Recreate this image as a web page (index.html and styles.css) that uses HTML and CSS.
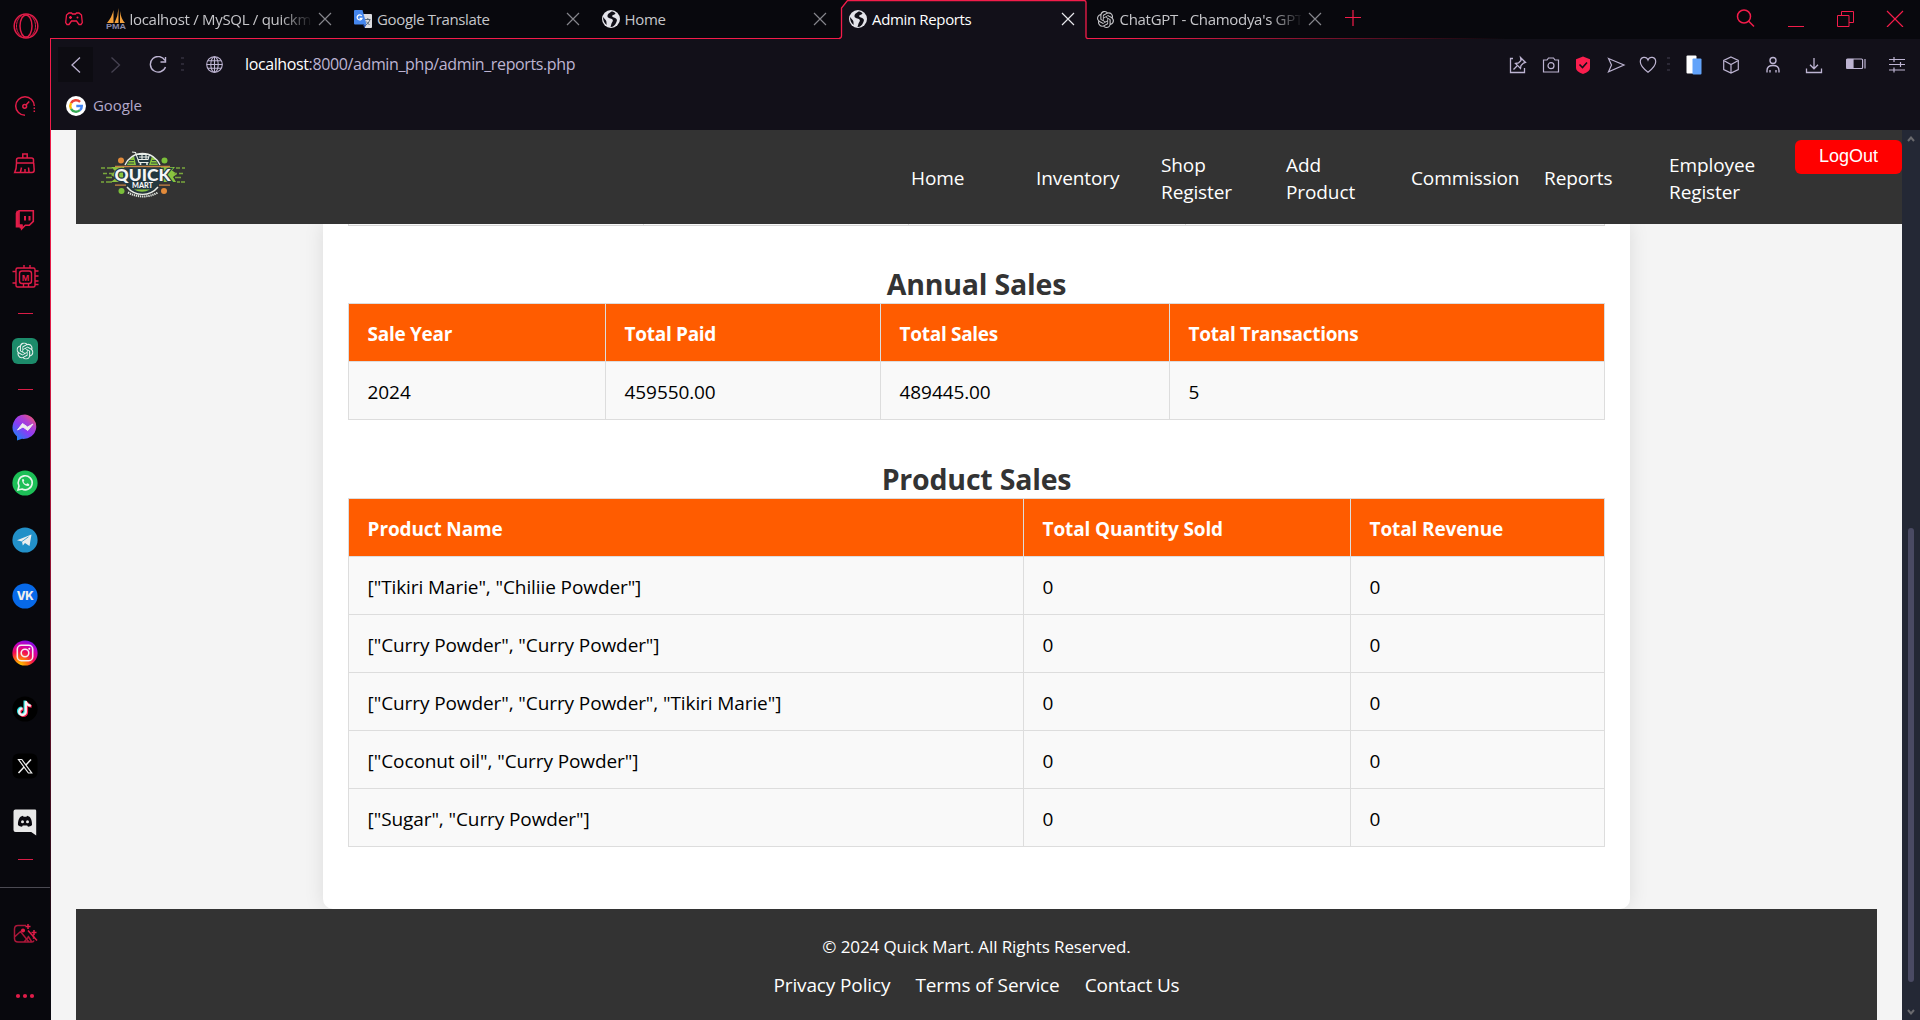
FILE: index.html
```html
<!DOCTYPE html>
<html lang="en">
<head>
<meta charset="utf-8">
<title>Admin Reports</title>
<link rel="stylesheet" href="styles.css">
</head>
<body>
<svg class="defs" width="0" height="0">
  <defs>
    <symbol id="close" viewBox="0 0 14 14"><path d="M1 1l12 12M13 1L1 13" fill="none" stroke="currentColor" stroke-width="1.2"/></symbol>
    <symbol id="world" viewBox="0 0 18 18"><circle cx="9" cy="9" r="9" fill="#e4e4ea"/><path d="M9.500 1.500C7 3 5 4.500 5.500 6.500c.5 2 3.500 1.500 5 3 1.200 1.500-.5 2.500-1 4L8.500 17c3 0 4.500-2 5.500-4 .5-1.500 1.500-2.500.5-4-1.500-1.500-4-1.500-4.500-3 .5-1.500 3-1 3.500-2.500-1-1.500-2.500-2-4-2zM1 7l3 3.500c1 1.500 0 3 1 4.500C2.500 13.500 1 11 1 7z" fill="#111018"/></symbol>
    <symbol id="knot" viewBox="0 0 24 24"><path fill="currentColor" d="M22.2819 9.8211a5.9847 5.9847 0 0 0-.5157-4.9108 6.0462 6.0462 0 0 0-6.5098-2.9A6.0651 6.0651 0 0 0 4.9807 4.1818a5.9847 5.9847 0 0 0-3.9977 2.9 6.0462 6.0462 0 0 0 .7427 7.0966 5.98 5.98 0 0 0 .511 4.9107 6.051 6.051 0 0 0 6.5146 2.9001A5.9847 5.9847 0 0 0 13.2599 24a6.0557 6.0557 0 0 0 5.7718-4.2058 5.9894 5.9894 0 0 0 3.9977-2.9001 6.0557 6.0557 0 0 0-.7475-7.073zm-9.022 12.6081a4.4755 4.4755 0 0 1-2.8764-1.0408l.1419-.0804 4.7783-2.7582a.7948.7948 0 0 0 .3927-.6813v-6.7369l2.02 1.1686a.071.071 0 0 1 .038.052v5.5826a4.504 4.504 0 0 1-4.4945 4.4944zm-9.6607-4.1254a4.4708 4.4708 0 0 1-.5346-3.0137l.142.0852 4.783 2.7582a.7712.7712 0 0 0 .7806 0l5.8428-3.3685v2.3324a.0804.0804 0 0 1-.0332.0615L9.74 19.9502a4.4992 4.4992 0 0 1-6.1408-1.6464zM2.3408 7.8956a4.485 4.485 0 0 1 2.3655-1.9728V11.6a.7664.7664 0 0 0 .3879.6765l5.8144 3.3543-2.0201 1.1685a.0757.0757 0 0 1-.071 0l-4.8303-2.7865A4.504 4.504 0 0 1 2.3408 7.872zm16.5963 3.8558L13.1038 8.364 15.1192 7.2a.0757.0757 0 0 1 .071 0l4.8303 2.7913a4.4944 4.4944 0 0 1-.6765 8.1042v-5.6772a.79.79 0 0 0-.407-.667zm2.0107-3.0231l-.142-.0852-4.7735-2.7818a.7759.7759 0 0 0-.7854 0L9.409 9.2297V6.8974a.0662.0662 0 0 1 .0284-.0615l4.8303-2.7866a4.4992 4.4992 0 0 1 6.6802 4.66zM8.3065 12.863l-2.02-1.1638a.0804.0804 0 0 1-.038-.0567V6.0742a4.4992 4.4992 0 0 1 7.3757-3.4537l-.142.0805L8.704 5.459a.7948.7948 0 0 0-.3927.6813zm1.0976-2.3654l2.602-1.4998 2.6069 1.4998v2.9994l-2.5974 1.4997-2.6067-1.4997Z"/></symbol>
    <linearGradient id="msg" x1="0.1" y1="1" x2="0.9" y2="0"><stop offset="0" stop-color="#0a8df5"/><stop offset=".45" stop-color="#8a3cf5"/><stop offset=".7" stop-color="#b040d0"/><stop offset="1" stop-color="#fa5a60"/></linearGradient>
    <radialGradient id="ig" cx=".3" cy="1" r="1.05"><stop offset="0" stop-color="#ffd000"/><stop offset=".3" stop-color="#ff6a10"/><stop offset=".55" stop-color="#f0085a"/><stop offset=".8" stop-color="#c800b8"/><stop offset="1" stop-color="#7a10f0"/></radialGradient>
  </defs>
</svg>

<aside class="sidebar">
  <div class="brand">
    <svg width="26" height="26" viewBox="0 0 26 26" fill="none" stroke="currentColor" stroke-width="1.5"><ellipse cx="13" cy="13" rx="11.800" ry="12"/><ellipse cx="13" cy="13" rx="6" ry="11"/><path d="M9 2.500C5 5 3.500 9 3.500 13S5 21 9 23.500M17 2.500c4 2.500 5.500 6.500 5.500 10.500s-1.500 8-5.500 10.500" stroke-width="1"/></svg>
  </div>
  <div class="tools">
    <svg width="28" height="28" viewBox="0 0 28 28" fill="none" stroke="currentColor" stroke-width="1.500"><path d="M14 23.300A9.300 9.300 0 1 1 23.300 14"/><path d="M23.300 15.500v4.500" stroke-dasharray="1.500 1.500"/><circle cx="13.700" cy="14.300" r="1.900"/><path d="M15 13l3.200-3.400"/></svg>
    <svg width="28" height="28" viewBox="0 0 28 28" fill="none" stroke="currentColor" stroke-width="1.500"><path d="M11.800 9V5h4.400v4M5.500 14V11q0-2 2-2h13q2 0 2 2v3zM5.500 14q0 6-1.800 9.500h17.300q2.200 0 2.200-2.500l-.5-7M9.500 23l1-4.500M14 23v-3M18 23l-.5-4.500"/></svg>
    <svg width="28" height="28" viewBox="0 0 28 28" fill="none" stroke="currentColor"><path d="M8 4.800h14.300v10.500l-4 4h-4l-3.600 3.500v-3.500H8z" stroke-width="1.600"/><path d="M7.200 5L6.200 7.500v12.500h4v2.500" stroke-width="3"/><path d="M14 10v4.500M18.500 10v4.500" stroke-width="2"/></svg>
    <svg width="28" height="28" viewBox="0 0 28 28" fill="none" stroke="currentColor" stroke-width="1.400"><rect x="5" y="5" width="19" height="19" rx="1.500"/><rect x="8.500" y="8" width="12" height="12.500" rx="2.500"/><path d="M13 2v3M19 2v3M12.500 24v-3.500M17.500 24v-3.500M1.500 8.500H5M1.500 20H5M24 8h3.500M24 13h3.500M24 18h3.500M24 21.500h3.500"/><text x="14.500" y="17.800" class="chip-letter">M</text></svg>
  </div>
  <hr class="dash dash-1">
  <svg class="gpt" width="28" height="28" viewBox="0 0 28 28"><rect x="1" y="1" width="26" height="26" rx="6" fill="#1c8b6a"/><use href="#knot" x="5.500" y="5.500" width="17" height="17" color="#e4efec"/></svg>
  <hr class="dash dash-2">
  <div class="apps">
    <svg width="28" height="28" viewBox="0 0 28 28"><path d="M14 1.500A12.500 12 0 1 1 11 25.800L6 27.500v-4A12.500 12.500 0 0 1 14 1.500z" fill="url(#msg)"/><path d="M6.500 17l5-6.500 5 3.500 5.500-3-5.200 6.500-4.800-3.500z" fill="#eee" stroke="#eee" stroke-width="1" stroke-linejoin="round"/></svg>
    <svg width="28" height="28" viewBox="0 0 28 28"><circle cx="14" cy="14" r="12.600" fill="#1dbf57"/><path d="M7 21l1-4A7 7 0 1 1 11 20z" fill="none" stroke="#e8f5ec" stroke-width="1.600"/><path d="M11.500 10c-1.800 2.500 2.500 7.600 5.800 7 1.500-.5 1.200-1.800.2-2.300l-1.300-.5-1 1c-1.500-.6-2.200-1.500-2.700-2.500l.8-1-.8-1.700z" fill="#e8f5ec"/></svg>
    <svg width="28" height="28" viewBox="0 0 28 28"><circle cx="14" cy="14" r="12.600" fill="#2290c8"/><path d="M6 14.300L20.500 8.500 18.500 20l-4.500-3-2.200 2.500-.8-4z" fill="#eee"/><path d="M11 15.500l6.500-4.700" stroke="#2290c8" stroke-width=".8"/></svg>
    <svg width="28" height="28" viewBox="0 0 28 28"><circle cx="14" cy="14" r="12.600" fill="#0769e8"/><text x="14" y="18.300" class="vk-mark">VK</text></svg>
    <svg width="28" height="28" viewBox="0 0 28 28" fill="none"><circle cx="14" cy="14" r="12.600" fill="url(#ig)"/><g stroke="#f4eef2" stroke-width="1.600"><rect x="6.300" y="6.300" width="15.400" height="15.400" rx="4"/><circle cx="14" cy="14" r="3.800"/></g><circle cx="18.300" cy="9.800" r="1" fill="#fff"/></svg>
    <svg width="28" height="28" viewBox="0 0 28 28" fill="none" stroke-width="2.800"><circle cx="14" cy="14" r="12.600" fill="#000"/><path d="M14.500 6v10.500a3.300 3.300 0 1 1-3.300-3.300M14.500 6q.5 4 5 4.500" stroke="#20e0e0" transform="translate(-.6 -.4)"/><path d="M14.500 6v10.500a3.300 3.300 0 1 1-3.300-3.300M14.500 6q.5 4 5 4.500" stroke="#fa2050" transform="translate(1.200 .9)"/><path d="M14.500 6v10.500a3.300 3.300 0 1 1-3.300-3.300M14.500 6q.5 4 5 4.500" stroke="#f4f4f4" transform="translate(.3 .2)" stroke-width="2.300"/></svg>
    <svg width="28" height="28" viewBox="0 0 28 28" fill="none"><rect x="1.500" y="1.500" width="25" height="25" rx="6" fill="#000"/><path d="M20 7.500L7.500 21" stroke="#eee" stroke-width="1.500"/><path d="M7.500 7.500h3.300L20.700 21h-3.300z" fill="#000" stroke="#eee" stroke-width="1.200"/></svg>
    <svg width="28" height="28" viewBox="0 0 28 28"><path d="M4.500 1.500h19.500q1.200 0 1.200 1.200V27.500l-5-3.500H4.500Q2.500 24 2.500 22V3.500q0-2 2-2z" fill="#e8e8e8"/><path d="M10 8.500l2-.7.5 1h3l.5-1 2 .7c2 1 3.200 5 3 8.500-1 1-2.500 1.700-4 1.700l-.8-1.200h-4.400l-.8 1.200c-1.500 0-3-.7-4-1.700-.2-3.500 1-7.500 3-8.500z" fill="#0a090f"/><circle cx="11.500" cy="13.800" r="1.500" fill="#e8e8e8"/><circle cx="16.500" cy="13.800" r="1.500" fill="#e8e8e8"/></svg>
  </div>
  <hr class="dash dash-3">
  <div class="bottom">
    <svg width="28" height="28" viewBox="0 0 28 28" fill="none" stroke="currentColor" stroke-width="1.500"><g opacity=".75"><path d="M15 5.500H7q-3.500 0-3.500 3.500v9.500q0 3.500 3.500 3.500h14q1.500 0 2-1.500M3.500 17l6-5.500 8 10M13 22l4-4.500M17 16l3.500 5.500M22.500 14v5"/></g><path d="M17 10.500L26 20.500"/><circle cx="12" cy="10.500" r="1.300" fill="currentColor"/><path d="M17 4v5M14.500 6.500h5M23 10v5M20.500 12.500h5"/></svg>
    <svg width="20" height="6" viewBox="0 0 20 6" fill="currentColor"><circle cx="3" cy="3" r="2.100"/><circle cx="10" cy="3" r="2.100"/><circle cx="17" cy="3" r="2.100"/></svg>
  </div>
</aside>

<div class="window">
  <div class="tabbar">
    <svg class="pad" width="18" height="16" viewBox="0 0 18 16" fill="none" stroke="currentColor" stroke-width="1.300"><path d="M4 2h2.500l1 1h3l1-1H14l2.500 2 .8 7.500-1.300 2h-2L11.500 10h-5L4 13.500H2l-1.300-2L1.500 4z"/><path d="M4 6.500h3M5.500 5v3"/><circle cx="12.500" cy="6.500" r="1" fill="currentColor" stroke="none"/></svg>
    <div class="tab first">
      <svg width="20" height="22" viewBox="0 0 20 22"><path d="M7.500 2v13H1Q6 9 7.500 2zM12.500 0v15H8.500Q12 8 12.500 0zM14 3q1 8 5 12h-5z" fill="#f2a03c"/><text x="0" y="21" textLength="20" lengthAdjust="spacingAndGlyphs" class="pma">PMA</text></svg>
      <span class="title fade">localhost / MySQL / quickm</span><svg class="x" width="14" height="14"><use href="#close"/></svg>
    </div>
    <div class="tab">
      <svg width="18" height="20" viewBox="0 0 18 20"><path d="M7 5h10q1 0 1 1v12q0 1-1 1h-6z" fill="#dcdce0"/><path d="M11 10.500h5.500M13.800 9v1.500M15.800 11q-1 3.500-4 5M12.200 12.500l3.300 3.500" stroke="#5a6a7a" fill="none"/><path d="M1 1h7.500l4 14.500H1q-1 0-1-1V2q0-1 1-1z" fill="#4587ee"/><path d="M7.700 7A2.500 2.500 0 1 0 8 9.300H5.600" fill="none" stroke="#fff" stroke-width="1.300"/><path d="M9 15.500h3.500L10.500 19z" fill="#2350b0"/></svg>
      <span class="title">Google Translate</span><svg class="x" width="14" height="14"><use href="#close"/></svg>
    </div>
    <div class="tab">
      <svg width="18" height="18"><use href="#world"/></svg>
      <span class="title">Home</span><svg class="x" width="14" height="14"><use href="#close"/></svg>
    </div>
    <div class="tab active">
      <svg class="frame" width="248" height="40" viewBox="0 0 248 40"><path d="M0 39V38.500Q1.500 38 1.500 36V8l6-7.500H244q2 0 2 2V37q0 1.500 2 1.500V39z" fill="#121019"/><path d="M-1 38.500Q1.500 38 1.500 36V8l6-7.500H244q2 0 2 2V37q0 1.500 2 1.500" fill="none" stroke="#f31c4a" stroke-width="1.300"/></svg>
      <svg width="18" height="18"><use href="#world"/></svg>
      <span class="title">Admin Reports</span><svg class="x" width="14" height="14"><use href="#close"/></svg>
    </div>
    <div class="tab">
      <svg width="17" height="17"><use href="#knot"/></svg>
      <span class="title fade gpt-title">ChatGPT - Chamodya's GPT</span><svg class="x" width="14" height="14"><use href="#close"/></svg>
    </div>
    <svg class="plus" width="16" height="16" viewBox="0 0 16 16"><path d="M8 0v16M0 7.500h16" stroke="currentColor" stroke-width="1.200"/></svg>
    <div class="controls">
      <svg width="20" height="20" viewBox="0 0 20 20" fill="none" stroke="currentColor" stroke-width="1.500"><circle cx="8" cy="7.500" r="6.500"/><path d="M12.500 12l5.500 5.500"/></svg>
      <svg width="16" height="20" viewBox="0 0 16 20"><path d="M0 17.500h16" stroke="currentColor"/></svg>
      <svg width="17" height="18" viewBox="0 0 17 18" fill="none" stroke="currentColor"><path d="M.5 6.500h11.500v11H.5zM4.500 6.500v-4h12v11H12"/></svg>
      <svg width="18" height="18" viewBox="0 0 18 18"><path d="M1 2l16 16M17 2L1 18" stroke="currentColor" stroke-width="1.200"/></svg>
    </div>
  </div>

  <div class="toolbar">
    <span class="back"><svg width="12" height="18" viewBox="0 0 12 18"><path d="M10 1.500L2 9l8 7.500" fill="none" stroke="currentColor" stroke-width="1.300"/></svg></span>
    <svg class="forward" width="12" height="18" viewBox="0 0 12 18"><path d="M1.500 1.500L9.500 9l-8 7.500" fill="none" stroke="currentColor" stroke-width="1.300"/></svg>
    <svg class="reload" width="18" height="18" viewBox="0 0 18 18" fill="none" stroke="currentColor" stroke-width="1.400"><path d="M16 4.500A7.800 7.800 0 1 0 16.500 11M16.500 1v5h-5"/></svg>
    <span class="dots"></span>
    <svg class="globe" width="17" height="17" viewBox="0 0 17 17" fill="none" stroke="currentColor" stroke-width="1.100"><circle cx="8.500" cy="8.500" r="7.800"/><ellipse cx="8.500" cy="8.500" rx="3.700" ry="7.800"/><path d="M.7 8.500h15.600M2 4.700h13M2 12.300h13M8.500.7v15.600"/></svg>
    <span class="url"><b>localhost</b>:8000/admin_php/admin_reports.php</span>
    <div class="actions">
      <svg width="20" height="20" viewBox="0 0 20 20" fill="none" stroke="currentColor" stroke-width="1.300"><path d="M5 3.500H2.500v14h14V13"/><path d="M12.500 2.500l5 5-2 .5-2.500 2.500-.5 3-5-5 3-.5L13 5.500zM9 11l-3.500 3.500"/></svg>
      <svg width="20" height="20" viewBox="0 0 20 20" fill="none" stroke="currentColor" stroke-width="1.200"><path d="M2.500 5H6l1.500-2h5L14 5h3.500v12h-15z"/><circle cx="10" cy="10.700" r="3"/></svg>
      <svg width="20" height="20" viewBox="0 0 20 20"><path d="M10 1.500l7 2.800v8.700q0 3.500-7 6-7-2.500-7-6V4.300z" fill="#fa1e4e"/><path d="M6.500 9.500l3 3 4.500-5" fill="none" stroke="#121019" stroke-width="1.600"/></svg>
      <svg width="20" height="20" viewBox="0 0 20 20" fill="none" stroke="currentColor" stroke-width="1.200"><path d="M2.500 3.500L18 10 2.500 16.800 5.500 10z"/></svg>
      <svg width="20" height="20" viewBox="0 0 20 20" fill="none" stroke="currentColor" stroke-width="1.200"><path d="M10 17.300C5 13.500 2.300 10.500 2.300 6.800 2.300 1.500 8.500 1 10 5c1.500-4 7.700-3.500 7.700 1.800 0 3.700-2.700 6.700-7.700 10.500z"/></svg>
    </div>
    <span class="dots"></span>
    <svg class="flow" width="20" height="22" viewBox="0 0 20 22"><rect x="2.500" y="1.500" width="10" height="18" rx="1" fill="#fff"/><rect x="8.500" y="4.500" width="9" height="16" rx="1" fill="#62a3fa"/></svg>
    <div class="actions wide">
      <svg width="20" height="20" viewBox="0 0 20 20" fill="none" stroke="currentColor" stroke-width="1.200"><path d="M10 2l7.300 3.500v9L10 18l-7.300-3.500v-9zM2.700 5.500L10 9.500l7.300-4M10 9.500V18"/></svg>
      <svg width="20" height="20" viewBox="0 0 20 20" fill="none" stroke="currentColor" stroke-width="1.400"><circle cx="10" cy="5.500" r="3"/><path d="M4 17.500v-2q0-5 6-5t6 5v2M7 17.500v-2.500M13 17.500v-2.500"/></svg>
      <svg width="20" height="20" viewBox="0 0 20 20" fill="none" stroke="currentColor" stroke-width="1.300"><path d="M10 3v10.500M6 9.800l4 4 4-4M2.500 13.500v4h15v-4"/></svg>
      <svg width="20" height="20" viewBox="0 0 20 20" fill="none" stroke="currentColor" stroke-width="1.200"><rect x=".6" y="4" width="16" height="9.500" rx="1"/><rect x="1" y="4.500" width="6" height="8.500" fill="currentColor"/><path d="M19 4v9.500"/></svg>
      <svg width="20" height="20" viewBox="0 0 20 20" fill="none" stroke="currentColor" stroke-width="1.200"><path d="M2 4.500h16M2 9.500h16M2 15h16M7 2v5M13.500 7v5M7 12.500v5"/></svg>
    </div>
  </div>

  <div class="bookmarks">
    <svg width="20" height="20" viewBox="0 0 20 20" fill="none" stroke-width="2.400"><circle cx="10" cy="10" r="10" fill="#fff" stroke="none"/><path d="M5 7.200A5.800 5.800 0 0 1 14.100 5.900" stroke="#ea4335"/><path d="M5 12.800A5.800 5.800 0 0 1 5 7.200" stroke="#fbbc05"/><path d="M13.900 14.200A5.800 5.800 0 0 1 5 12.800" stroke="#34a853"/><path d="M10.300 10h5.500q0 2.700-1.900 4.200" stroke="#4285f4"/></svg>
    <span>Google</span>
  </div>

  <div class="viewport">
    <div class="page">
      <header class="site-header">
        <svg class="logo" width="84" height="52" viewBox="0 0 84 52">
          <path d="M10 18h64l-3 3.500 5 3.500-4 3 3 5H10l5-4-5-3 4-4z" fill="#8ac43f"/>
          <path d="M0 19h4M6 19h5M2 24.500h4M8 24.500h4M5 28.500h6M0 33h3M5 33h6M75 19h4M81 19h3M73 24.500h3M78 24.500h4M74 28.500h6M76 33h3M80 33h4" stroke="#7aa83c" stroke-width="1.500"/>
          <circle cx="41.500" cy="25" r="19.500" fill="#24383f"/>
          <path d="M26 16q2-6 7-9l2 9zM57 16q-2-6-6-9l-3 9z" fill="#8ac43f"/>
          <path d="M28 11.500h5M27 14h6M51 11.500h4M50 14h6" stroke="#24383f" stroke-width=".9"/>
          <path d="M24 16A19 19 0 0 1 59 16M26 38a20 20 0 0 0 31 0" fill="none" stroke="#e9eee8" stroke-width="1.400"/>
          <path d="M31 3l3.500.5L38 13.500h9.500M35.500 5.500h13L47 10.500h-9.500M38 8h10M41 5.500v5M45 5.500v5" fill="none" stroke="#e9eee8" stroke-width="1.100"/>
          <circle cx="39.500" cy="15" r="1" fill="#e9eee8"/><circle cx="46" cy="15" r="1" fill="#e9eee8"/>
          <path d="M14 17.500h55M14 36.200h11M58 36.200h11" stroke="#c98545" stroke-width="1.300"/>
          <circle cx="20" cy="11.500" r="3" fill="#e38b3a"/><circle cx="63.500" cy="11.500" r="3" fill="#7bbf3a"/><circle cx="20.500" cy="42" r="3" fill="#7bbf3a"/><circle cx="63" cy="42" r="3" fill="#e38b3a"/>
          <path d="M33 40.500h16q-8 4.500-16 0z" fill="#8ac43f"/>
          <text x="13.500" y="32" textLength="56" lengthAdjust="spacingAndGlyphs" class="logo-quick">QUICK</text>
          <text x="31" y="39" textLength="21" lengthAdjust="spacingAndGlyphs" class="logo-mart">MART</text>
          <path d="M27 43.500q15 8 30 0" fill="none" stroke="#dfe5df" stroke-width="2" stroke-dasharray="1.300 .8"/>
        </svg>
        <nav>
          <a>Home</a><a>Inventory</a><a class="two">Shop<br>Register</a><a class="two">Add<br>Product</a><a>Commission</a><a>Reports</a><a class="two">Employee<br>Register</a>
        </nav>
        <button class="logout">LogOut</button>
      </header>

      <main class="card">
        <div class="cut"><i></i><i></i><i></i><i></i></div>
        <h2>Annual Sales</h2>
        <table class="annual">
          <colgroup><col class="c1"><col class="c2"><col class="c3"><col></colgroup>
          <tr><th>Sale Year</th><th>Total Paid</th><th>Total Sales</th><th>Total Transactions</th></tr>
          <tr><td>2024</td><td>459550.00</td><td>489445.00</td><td>5</td></tr>
        </table>
        <h2>Product Sales</h2>
        <table class="products">
          <colgroup><col class="c1"><col class="c2"><col></colgroup>
          <tr><th>Product Name</th><th>Total Quantity Sold</th><th>Total Revenue</th></tr>
          <tr><td>["Tikiri Marie", "Chiliie Powder"]</td><td>0</td><td>0</td></tr>
          <tr><td>["Curry Powder", "Curry Powder"]</td><td>0</td><td>0</td></tr>
          <tr><td>["Curry Powder", "Curry Powder", "Tikiri Marie"]</td><td>0</td><td>0</td></tr>
          <tr><td>["Coconut oil", "Curry Powder"]</td><td>0</td><td>0</td></tr>
          <tr><td>["Sugar", "Curry Powder"]</td><td>0</td><td>0</td></tr>
        </table>
      </main>

      <footer>
        <p>© 2024 Quick Mart. All Rights Reserved.</p>
        <div class="links"><a>Privacy Policy</a><a>Terms of Service</a><a>Contact Us</a></div>
      </footer>
    </div>
    <div class="scrollbar">
      <svg width="8" height="6" viewBox="0 0 8 6"><path d="M1 5l3-3.500L7 5" fill="none" stroke="#6a6a6e" stroke-width="2"/></svg>
      <span class="thumb"></span>
      <svg width="8" height="6" viewBox="0 0 8 6"><path d="M1 1l3 3.500L7 1" fill="none" stroke="#6a6a6e" stroke-width="2"/></svg>
    </div>
  </div>
</div>
</body>
</html>
```
FILE: styles.css
```css
* { box-sizing: border-box; }

body {
  margin: 0;
  width: 1920px;
  height: 1020px;
  overflow: hidden;
  display: flex;
  background: #08080d;
  font-family: "Open Sans", "Noto Sans", sans-serif;
}

svg { display: block; flex: none; }
.defs { position: absolute; }

/* Sidebar */
.sidebar {
  width: 51px;
  height: 1020px;
  flex: none;
  display: flex;
  flex-direction: column;
  align-items: center;
  padding-right: 1px;
  color: #e01c48;
  background:
    linear-gradient(#f31c4a, #e01c48 30%, #5d1027 70%, #0a0910 96%) 50px 38px / 1px 982px no-repeat,
    #08080d;
}
.brand { height: 51px; display: flex; align-items: center; padding-left: 1px; }
.tools { margin-top: 41px; height: 199px; display: flex; flex-direction: column; justify-content: space-between; }
.dash { width: 15px; height: 1px; margin: 0; border: 0; background: #d91c46; flex: none; }
.dash-1 { margin-top: 22px; }
.gpt { margin-top: 23px; }
.dash-2 { margin-top: 24px; }
.apps { margin-top: 23px; height: 423px; display: flex; flex-direction: column; justify-content: space-between; }
.dash-3 { margin-top: 23px; }
.bottom {
  width: 50px;
  margin-top: 27px;
  border-top: 1px solid #4b4a52;
  padding-top: 32px;
  display: flex;
  flex-direction: column;
  align-items: center;
  gap: 45px;
}
.chip-letter { font: 700 9px "Liberation Sans", sans-serif; text-anchor: middle; fill: currentColor; stroke: none; }
.vk-mark { font: 800 11.500px Inter, sans-serif; text-anchor: middle; fill: #eee; letter-spacing: -.5px; }

/* Window chrome */
.window { flex: 1; display: flex; flex-direction: column; background: #121019; }
.tabbar {
  height: 39px;
  flex: none;
  display: flex;
  color: #f31c4a;
  background:
    linear-gradient(90deg, #f31c4a 1080px, rgba(243, 28, 74, 0) 1455px) 0 38px / 100% 1px no-repeat,
    #08080d;
}
.pad { margin: 11px 15.500px 0 14px; }
.tab {
  position: relative;
  width: 247.500px;
  flex: none;
  display: flex;
  align-items: center;
  padding: 0 14px 0 8px;
  color: #c6c6ca;
}
.tab svg { position: relative; margin-top: -1px; }
.tab svg.frame { position: absolute; left: -1px; top: 0; margin: 0; overflow: visible; }
.tab .title {
  position: relative;
  width: 181px;
  margin-left: 5px;
  flex: none;
  font-size: 15px;
  line-height: 36px;
  padding-bottom: 2px;
  letter-spacing: -.35px;
  white-space: nowrap;
}
.tab .fade { -webkit-mask-image: linear-gradient(90deg, #000 150px, transparent 183px); mask-image: linear-gradient(90deg, #000 150px, transparent 183px); }
.tab .gpt-title { margin-left: 6px; letter-spacing: -.3px; }
.tab .x { margin-left: auto; color: #85858b; }
.tab.first svg:first-child { margin-left: -1px; }
.tab.first .title { margin-left: 4px; letter-spacing: -.3px; }
.tab.active { color: #fff; }
.tab.active .x { color: #e8e8ec; }
.pma { font: 700 8px "Liberation Sans", sans-serif; fill: #8a8aa8; }
.plus { margin: 10px 0 0 9px; }
.controls { margin-left: auto; padding: 9px 16px 0 0; display: flex; gap: 32px; }
.controls svg:nth-child(2) { margin-right: 1px; }

.toolbar { height: 51px; flex: none; display: flex; align-items: center; padding-left: 7px; color: #bdb4d2; }
.back { width: 35px; height: 35px; display: grid; place-items: center; background: #0d0c12; }
.forward { margin-left: 17px; opacity: .3; }
.reload { margin-left: 27px; }
.dots {
  width: 3px;
  height: 15px;
  margin-left: 14px;
  background: repeating-linear-gradient(#2b2835 0 2px, transparent 2px 6px);
}
.globe { margin-left: 22px; }
.url { margin-left: 22px; padding-bottom: 2px; font-size: 16px; letter-spacing: -.38px; }
.url b { font-weight: 400; color: #fff; }
.actions { margin-left: auto; display: flex; gap: 12.500px; }
.actions + .dots { margin-left: 9px; }
.flow { margin-left: 14px; }
.actions.wide { margin-left: 17px; gap: 21.500px; padding-right: 13px; }

.bookmarks { height: 40px; flex: none; display: flex; align-items: center; gap: 7px; padding: 0 0 8px 15px; color: #b3a9cb; font-size: 15px; letter-spacing: -.1px; }
.bookmarks span { padding-bottom: 2px; }

/* Web page */
.viewport { flex: 1; display: flex; min-height: 0; }
.page { flex: 1; display: flex; flex-direction: column; background: #f4f4f4; padding-left: 25px; overflow: hidden; }
.site-header {
  position: relative;
  z-index: 1;
  height: 94px;
  flex: none;
  display: flex;
  background: #333;
  color: #fff;
}
.logo { margin: 19px 0 0 25px; }
.logo-quick { font: 900 17.500px Lato, sans-serif; fill: #f5f5f5; stroke: #24383f; stroke-width: 2.500px; paint-order: stroke; }
.logo-mart { font: 900 6.500px Lato, sans-serif; fill: #f5f5f5; }
nav {
  margin-left: 726px;
  display: grid;
  grid-template-columns: 125px 125px 125px 125px 133px 125px 125px;
  align-items: center;
  font-size: 19px;
  line-height: 27px;
  letter-spacing: -.1px;
  padding-top: 2px;
}
nav .two { padding-top: 2px; }
.logout {
  width: 107px;
  height: 34px;
  margin: 10px 0 0 auto;
  padding: 0 0 2px;
  border: 0;
  border-radius: 6px;
  background: #f00;
  color: #fff;
  font: 18px "Liberation Sans", Arial, sans-serif;
}

.card {
  width: 1307px;
  height: 685px;
  flex: none;
  margin-left: 247px;
  padding: 0 25px;
  background: #fff;
  border-radius: 0 0 10px 10px;
  box-shadow: 0 0 20px rgba(0, 0, 0, .1);
}
.cut {
  height: 2px;
  display: grid;
  grid-template-columns: 295px 265px 277px 420px;
  background: #f9f9f9;
  border-bottom: 1px solid #d6d6d6;
}
.cut i { border-left: 1px solid #ddd; }
.cut i:last-child { border-right: 1px solid #ddd; }
h2 {
  margin: 0;
  padding-top: 39px;
  height: 77px;
  text-align: center;
  font-size: 28.500px;
  line-height: 38px;
  font-weight: 700;
  letter-spacing: -.2px;
  color: #333;
}
table + h2 { height: 78px; padding-top: 40px; }
table {
  width: 1257px;
  table-layout: fixed;
  border-collapse: collapse;
  font-size: 19px;
  letter-spacing: -.1px;
  color: #000;
}
th, td { height: 58px; padding: 3px 18px 0 18.600px; border: 1px solid #ddd; text-align: left; background: #f9f9f9; }
th { background: #ff5c00; color: #fff; font-weight: 700; letter-spacing: -.3px; }
.products th { letter-spacing: -.13px; }
.annual .c1 { width: 257px; }
.annual .c2 { width: 275px; }
.annual .c3 { width: 289px; }
.products .c1 { width: 675px; }
.products .c2 { width: 327px; }

footer {
  position: relative;
  width: 1801px;
  flex: 1;
  background: #333;
  color: #fff;
  text-align: center;
  padding-top: 24px;
}
footer p { margin: 0; font-size: 17px; line-height: 27px; letter-spacing: -.1px; }
.links { margin-top: 12px; display: flex; justify-content: center; gap: 25px; font-size: 19px; line-height: 27px; letter-spacing: -.12px; }

.scrollbar { width: 18px; flex: none; background: #242835; display: flex; flex-direction: column; align-items: center; padding: 6px 0 5px; }
.thumb { width: 6px; height: 454px; margin: 386px 0 27px; border-radius: 3px; background: #4a4a63; }
```
